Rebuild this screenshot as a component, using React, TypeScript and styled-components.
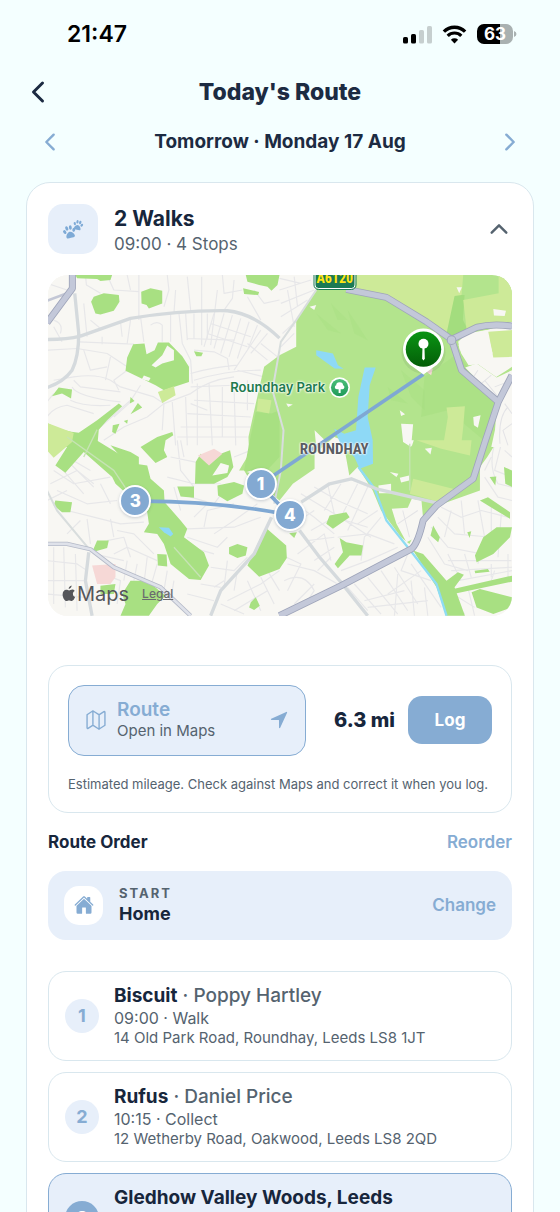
import React from 'react';
import styled, { createGlobalStyle } from 'styled-components';
import {
  IoChevronBack,
  IoChevronForward,
  IoChevronUp,
  IoHome,
  IoMapOutline,
  IoNavigate,
} from 'react-icons/io5';

const color = {
  page: '#f4ffff',
  ink: '#17263c',
  title: '#1c2b42',
  muted: '#55636f',
  blue: '#86acd3',
  tint: '#e7effa',
  line: '#d9e7ee',
  white: '#ffffff',
};

const GlobalStyle = createGlobalStyle`
  *, *::before, *::after { box-sizing: border-box; }
  html, body { margin: 0; background: ${color.page}; }
  body {
    font-family: Inter, "Liberation Sans", sans-serif;
    color: ${color.ink};
    -webkit-font-smoothing: antialiased;
  }
  button { font: inherit; color: inherit; background: none; border: 0; padding: 0; cursor: pointer; }
  h1, h2, h3, p, ol { margin: 0; padding: 0; font: inherit; }
`;

const Screen = styled.div`
  height: 100vh;
  display: flex;
  flex-direction: column;
  overflow: hidden;
`;

const StatusBar = styled.div`
  display: flex;
  align-items: center;
  justify-content: space-between;
  height: 68px;
  padding: 0 43px 0 67px;
  color: #000;
`;

const Clock = styled.time`
  font-size: 23px;
  line-height: 28px;
  font-weight: 600;
`;

const StatusIcons = styled.div`
  display: flex;
  align-items: center;
  gap: 10px;
`;

const Battery = styled.div`
  width: 40px;
  height: 20px;
  display: flex;
`;

const BatteryLevel = styled.span`
  width: 36px;
  height: 20px;
  border-radius: 7px;
  background: linear-gradient(90deg, #000 63%, #a9b1b1 63%);
  color: #fff;
  font-size: 17px;
  line-height: 20px;
  font-weight: 700;
  text-align: center;
`;

const Header = styled.header`
  display: grid;
  grid-template-columns: 32px 1fr 32px;
  align-items: center;
  height: 48px;
  padding: 0 22px;
  color: ${color.title};
`;

const IconButton = styled.button<{ $tone?: string }>`
  display: flex;
  align-items: center;
  justify-content: center;
  color: ${(p) => p.$tone ?? 'inherit'};
`;

const Title = styled.h1`
  font-size: 23px;
  line-height: 28px;
  font-weight: 800;
  text-align: center;
`;

const DateBar = styled.nav`
  display: flex;
  align-items: center;
  justify-content: space-between;
  height: 52px;
  padding: 0 37px;
`;

const DateLabel = styled.h2`
  font-size: 19px;
  line-height: 24px;
  font-weight: 700;
  color: ${color.title};
`;

const Scroll = styled.main`
  flex: 1;
  min-height: 0;
  overflow-y: auto;
  scrollbar-width: none;
  padding: 14px 26px 32px;
`;

const Card = styled.section`
  background: ${color.white};
  border: 1px solid ${color.line};
  border-radius: 24px;
  padding: 21px;
`;

const Summary = styled.div`
  display: flex;
  align-items: center;
  gap: 16px;
  padding-bottom: 21px;
`;

const Tile = styled.span<{ $size: number; $bg: string }>`
  flex: none;
  display: flex;
  align-items: center;
  justify-content: center;
  width: ${(p) => p.$size}px;
  height: ${(p) => p.$size}px;
  border-radius: 15px;
  background: ${(p) => p.$bg};
  color: ${color.blue};
`;

const Grow = styled.div`
  flex: 1;
  min-width: 0;
`;

const SummaryTitle = styled.h2`
  font-size: 21px;
  line-height: 26px;
  font-weight: 700;
`;

const SummaryMeta = styled.p`
  font-size: 17px;
  line-height: 24px;
  color: ${color.muted};
`;

const SummaryText = styled(Grow)`
  padding-top: 2px;
  margin-bottom: -2px;
`;

const MapFrame = styled.div`
  position: relative;
  aspect-ratio: 463 / 340;
  border-radius: 20px;
  overflow: hidden;
  background: #f8f7f3;
`;

const MapDrawing = styled.svg`
  display: block;
  width: 100%;
  height: 100%;
`;

const Pin = styled.span<{ $x: number; $y: number }>`
  position: absolute;
  left: ${(p) => p.$x}%;
  top: ${(p) => p.$y}%;
  transform: translate(-50%, -50%);
  width: 32px;
  height: 32px;
  border: 2px solid #fff;
  border-radius: 50%;
  background: #83a9d2;
  box-shadow: 0 1px 3px rgba(60, 80, 110, 0.25);
  color: #fff;
  font-size: 17px;
  line-height: 28px;
  font-weight: 800;
  text-align: center;
`;

const MapLabel = styled.span<{ $x: number; $y: number }>`
  position: absolute;
  left: ${(p) => p.$x}%;
  top: ${(p) => p.$y}%;
  transform: translate(-50%, -50%);
  white-space: nowrap;
`;

const ParkLabel = styled(MapLabel)`
  font-size: 13px;
  line-height: 16px;
  font-weight: 600;
  color: #217a4e;
  text-shadow: 0 0 2px #fff, 0 0 2px #fff, 0 0 3px #fff;
`;

const DistrictLabel = styled(MapLabel)`
  font-family: "Liberation Sans Narrow", "Roboto Condensed", Roboto, sans-serif;
  font-size: 15px;
  line-height: 18px;
  font-weight: 700;
  color: #5a5d63;
  text-shadow: 0 0 2px #fff, 0 0 2px #fff, 0 0 2px #fff;
`;

const RoadShield = styled(MapLabel)`
  width: 41px;
  height: 22px;
  border: 1px solid #fff;
  outline: 1px solid #1b7a55;
  border-radius: 4px;
  background: #1b7a55;
  color: #ffe512;
  font-family: "Liberation Sans Narrow", "Roboto Condensed", Roboto, sans-serif;
  font-size: 14px;
  line-height: 20px;
  font-weight: 700;
  text-align: center;
`;

const MapCredit = styled.div`
  position: absolute;
  left: 14px;
  bottom: 10px;
  display: flex;
  align-items: center;
  color: #55565a;
`;

const MapBrand = styled.span`
  display: flex;
  align-items: center;
  gap: 1px;
  margin-right: 13px;
  font-size: 20px;
  line-height: 24px;
  font-weight: 400;
`;

const LegalLink = styled.a`
  font-size: 12px;
  line-height: 16px;
  color: #6a6b6e;
  font-weight: 500;
  text-decoration: underline;
`;

const Panel = styled.section`
  margin-top: 49px;
  border: 1px solid ${color.line};
  border-radius: 20px;
  padding: 19px;
`;

const PanelRow = styled.div`
  display: flex;
  align-items: center;
`;

const RouteButton = styled.button`
  flex: 1;
  display: flex;
  align-items: center;
  gap: 10px;
  height: 71px;
  padding: 0 16px;
  border: 1px solid ${color.blue};
  border-radius: 16px;
  background: ${color.tint};
  color: ${color.blue};
  text-align: left;
`;

const ButtonTitle = styled.span`
  display: block;
  font-size: 19px;
  line-height: 22px;
  font-weight: 600;
`;

const ButtonNote = styled.span`
  display: block;
  font-size: 15px;
  line-height: 20px;
  color: ${color.muted};
`;

const Miles = styled.strong`
  margin: 0 13px 0 28px;
  font-size: 20px;
  line-height: 24px;
  font-weight: 800;
`;

const LogButton = styled.button`
  width: 84px;
  height: 48px;
  border-radius: 14px;
  background: ${color.blue};
  color: #fff;
  font-size: 17px;
  line-height: 24px;
  font-weight: 700;
`;

const Note = styled.p`
  margin-top: 19px;
  font-size: 13px;
  line-height: 18px;
  color: ${color.muted};
`;

const OrderHead = styled.div`
  display: flex;
  align-items: center;
  justify-content: space-between;
  height: 58px;
`;

const OrderTitle = styled.h3`
  font-size: 17px;
  line-height: 24px;
  font-weight: 700;
`;

const TextButton = styled.button`
  font-size: 17px;
  line-height: 24px;
  font-weight: 600;
  color: ${color.blue};
`;

const StartCard = styled.div`
  display: flex;
  align-items: center;
  gap: 16px;
  height: 69px;
  padding: 0 16px;
  border-radius: 18px;
  background: ${color.tint};
`;

const Eyebrow = styled.p`
  font-size: 13px;
  line-height: 18px;
  font-weight: 700;
  letter-spacing: 2px;
  color: ${color.muted};
`;

const Place = styled.p`
  font-size: 18px;
  line-height: 24px;
  font-weight: 700;
`;

const Stops = styled.ol`
  list-style: none;
  margin-top: 31px;
  display: flex;
  flex-direction: column;
  gap: 11px;
`;

const StopCard = styled.li<{ $active?: boolean }>`
  display: flex;
  align-items: center;
  gap: 15px;
  min-height: 90px;
  padding: 0 16px;
  border: 1px solid ${(p) => (p.$active ? color.blue : color.line)};
  border-radius: 18px;
  background: ${(p) => (p.$active ? color.tint : color.white)};
`;

const StopNumber = styled.span<{ $active?: boolean }>`
  flex: none;
  width: 34px;
  height: 34px;
  border-radius: 50%;
  background: ${(p) => (p.$active ? color.blue : color.tint)};
  color: ${(p) => (p.$active ? '#fff' : color.blue)};
  font-size: 18px;
  line-height: 34px;
  font-weight: 700;
  text-align: center;
`;

const StopBody = styled.div`
  flex: 1;
  min-width: 0;
  min-height: 64px;
`;

const StopName = styled.h3`
  font-size: 19px;
  line-height: 24px;
  font-weight: 700;
`;

const Owner = styled.span`
  font-weight: 500;
  color: ${color.muted};
`;

const StopTime = styled.p`
  font-size: 16px;
  line-height: 20px;
  color: ${color.muted};
`;

const StopAddress = styled.p`
  font-size: 15px;
  line-height: 20px;
  color: ${color.muted};
`;

const PawShape = () => (
  <>
    <path d="M0 0.6C2.4 0.6 5.4 4 5.4 6.3C5.4 9 2.4 8.2 0 8.2S-5.4 9-5.4 6.3C-5.4 4-2.4 0.6 0 0.6Z" />
    <ellipse cx="-5.8" cy="-0.6" rx="1.8" ry="2.6" transform="rotate(-24 -5.8 -0.6)" />
    <ellipse cx="-2.3" cy="-4.4" rx="1.8" ry="2.9" transform="rotate(-6 -2.3 -4.4)" />
    <ellipse cx="2.3" cy="-4.4" rx="1.8" ry="2.9" transform="rotate(6 2.3 -4.4)" />
    <ellipse cx="5.8" cy="-0.6" rx="1.8" ry="2.6" transform="rotate(24 5.8 -0.6)" />
  </>
);

const PawsIcon = () => (
  <svg width="22" height="20" viewBox="0 0 22 20" fill="#7eaad6" aria-hidden="true">
    <g transform="translate(7.4 12.4) rotate(-14) scale(0.8)">
      <PawShape />
    </g>
    <g transform="translate(16.2 5.8) rotate(14) scale(0.62)">
      <PawShape />
    </g>
  </svg>
);

const SignalIcon = () => (
  <svg width="29" height="19" viewBox="0 0 29 19" aria-hidden="true">
    <rect x="0" y="12" width="5" height="6.5" rx="1.6" />
    <rect x="8" y="9" width="5" height="9.5" rx="1.6" />
    <rect x="16" y="5" width="5" height="13.5" rx="1.6" fill="#c6cfcf" />
    <rect x="24" y="1" width="5" height="17.5" rx="1.6" fill="#c6cfcf" />
  </svg>
);

const WifiIcon = () => (
  <svg width="25" height="19" viewBox="0 0 24 19" fill="none" stroke="#000" aria-hidden="true">
    <path d="M1.4 6.6A15 15 0 0 1 22.6 6.6" strokeWidth="3.4" />
    <path d="M5.2 10.8A9.6 9.6 0 0 1 18.8 10.8" strokeWidth="3.2" />
    <path d="M12 18.6L8.4 14.7A5.2 5.2 0 0 1 15.6 14.7Z" fill="#000" stroke="none" />
  </svg>
);

const AppleIcon = () => (
  <svg width="14" height="17" viewBox="0 0 14 17" fill="currentColor" aria-hidden="true">
    <path d="M9.6 0.5C9.7 2 8.3 3.9 6.7 3.9C6.5 2.3 8.1 0.7 9.6 0.5ZM12.7 6C11.5 6.7 10.9 7.6 10.9 8.9C10.9 10.4 11.8 11.5 13.1 12C12.5 13.7 11.1 16 9.7 16C8.7 16 8.3 15.4 7.1 15.4C5.9 15.4 5.4 16 4.5 16C2.7 16 0.6 12.5 0.6 9.4C0.6 6.4 2.4 4.7 4.4 4.7C5.5 4.7 6.3 5.4 7.1 5.4C7.9 5.4 8.9 4.6 10.2 4.6C11.2 4.6 12.1 5.1 12.7 6Z" />
  </svg>
);

const minorRoads = [
  // north-west streets
  'M115 15L118 45L160 70M180 15L200 60L275 65M240 15L250 60M275 15V150M360 15L365 60L350 110M385 60L380 130M420 20L430 120M463 20V225M510 60L490 225M525 15L530 70L585 60M560 30L555 85L530 120',
  'M0 40L60 60M20 150Q50 160 40 190M20 170L45 215M0 240L90 235L180 250L240 290M95 215L260 222M110 100L120 200M130 150L160 175M165 200V222M220 155L225 200M250 150L240 220M280 140L290 215M310 165Q330 150 345 165V215M370 130V215M395 130L405 220L430 270L435 340M415 130L420 210M440 130V205M480 130V205M420 205L560 210',
  'M500 130L470 230M530 130L500 235M555 135L520 250M580 145L545 260M605 155L570 265M630 165L600 240M490 160L610 200M480 190L600 230M640 180L560 300M660 190L610 250M600 220L660 270M440 240L500 245L540 265L545 300M430 310Q500 290 570 285M440 330Q540 300 640 300M430 350L560 345M570 300L650 320',
  'M20 330L80 320Q150 310 190 330L220 350L320 380L350 400L430 370Q480 330 560 320M80 330L100 350L220 365M75 350Q90 380 220 395M70 390Q110 410 190 405M0 440Q20 410 60 405L140 430M0 395L20 370M110 240L130 300L180 290M190 260L175 330M240 300L200 330L215 360M200 440L245 400L280 345M160 470L250 390M170 510L230 470L300 440L350 400',
  'M350 400L345 480M375 395L385 525M415 380L420 525M450 340V525M485 340L495 525M525 350V500M560 350L565 525M600 330L600 420M440 390L620 400M420 430L610 440M400 470L610 470M390 500L600 500M430 400L480 420',
  // south-west streets
  'M20 600L80 640L190 620M10 640L90 600L140 640M30 660L120 700L210 690M40 590L110 670M70 580L140 650M0 690L60 660M60 720L140 740L220 760L290 755M120 745L130 820M190 745L200 800M160 640L190 700M100 750L60 790M60 560L130 600',
  'M210 780L260 790L320 850M180 810L230 800L250 860M200 850L240 830L330 870M140 850L230 870M0 870L90 880L120 900M20 830V1000M50 830L55 1010M85 850L90 1020M0 930H110M0 970L115 980M140 900L220 930L210 1000M240 870L230 930M270 880L260 930M300 860L290 940M330 880L310 950M360 900L350 960M380 930L370 990',
  'M390 510L400 600L440 650M370 560L445 575M360 620L440 640L520 640M380 650L400 720M430 680L500 700L530 660M420 775L560 770L640 740M440 740L480 700M470 770L480 720L560 700M500 790L560 750L630 700M420 800L510 830L540 800M430 830L500 850M490 890L560 900L600 860M500 950L530 930M460 940L520 950M420 970L500 990M540 870L530 950M570 900L560 960M400 510L410 560M560 560L610 540',
  'M540 990L640 940L696 900M560 1020L660 960M600 930L640 1020M640 920L680 1000M520 1000L590 1030M660 900L696 960',
  // streets below the park
  'M730 690L800 740L860 790M760 670L860 730L970 800M800 650L870 690L960 730M840 640L860 730M880 640L830 720M930 640L880 740M960 650L900 780M740 760L800 720M790 780L860 740L960 770M870 800L960 790L1040 820M780 810L860 800M750 850L830 790L850 870M800 870L860 830M880 900L960 870L1050 830M990 720L930 760M1000 740L950 800L940 870',
  'M696 850L760 880L720 960M720 880L800 900L870 940M710 930Q770 900 800 960L780 990M740 1000L800 940M810 900L850 860M900 950L960 1020M920 940L1000 1030M960 920L1050 1030M1000 900L1080 1020M1040 890L1110 1000M1020 970L1120 900M950 990L1070 960M960 1010L1140 990M1080 850L1060 900L1150 930M1090 880L1180 1010M1050 910L1040 1035M1090 930L1100 1035M1130 950L1140 1035',
  // eastern streets
  'M1180 710L1240 740L1300 720L1380 740M1170 740L1220 790L1330 800M1150 770L1200 830L1300 850M1140 800L1190 880L1260 900M1240 690L1250 790M1290 690L1310 800L1290 880M1210 720L1190 800M1330 710L1330 800M1360 730L1350 860M1200 870L1390 870M1210 900L1392 890M1230 930L1392 900M1200 850L1240 930M1250 850L1270 920M1330 880V920M1200 960L1280 1010M1210 980L1250 1030M1260 950L1280 1035M1340 900L1330 930M1380 850V920',
  'M1340 520Q1320 590 1350 640L1392 650M1360 520L1340 600L1392 620M1370 540L1392 560M1310 620L1350 680L1392 690M1330 560L1310 600M1380 430Q1350 440 1352 500M1392 460L1365 480L1370 520',
  // streets west of the park
  'M790 30L696 60M800 60L700 100M780 90L700 140M760 40L696 25M740 20L750 110M770 130L705 190M700 230L740 190M720 60L740 170M640 220L690 260M620 60L650 100L696 90M600 80L640 150',
];

const trunkRoads =
  'M896 58L1016 82L1136 155L1211 208L1286 172Q1330 160 1392 168M1211 208L1241 300L1351 395L1392 315M1351 395L1326 470L1311 515L1276 625L1166 705L1126 750Q1110 820 1091 835L881 945L696 1035M76 15V55L0 158';

const MapPicture = () => (
  <MapDrawing viewBox="3 15 1389 1020" preserveAspectRatio="xMidYMid slice" aria-hidden="true">
    <defs>
      <linearGradient id="pinFill" x1="0" y1="0" x2="0" y2="1">
        <stop offset="0" stopColor="#0a9414" />
        <stop offset="1" stopColor="#045e08" />
      </linearGradient>
      <linearGradient id="badgeFill" x1="0" y1="0" x2="0" y2="1">
        <stop offset="0" stopColor="#4cc07a" />
        <stop offset="1" stopColor="#1f9a58" />
      </linearGradient>
    </defs>
    <rect x="0" y="0" width="1400" height="1050" fill="#f8f7f3" />

    <g fill="none" stroke="#e7e7e9" strokeWidth="3.5" strokeLinejoin="round">
      {minorRoads.map((d) => (
        <path key={d} d={d} />
      ))}
    </g>

    <path
      fill="#b3e48d"
      d="M805 15H1392V155L1318 180L1250 195L1232 225L1240 250L1262 285L1290 282L1345 320L1392 290V330L1345 395L1340 525L1318 560L1296 590V660L1170 705L1110 770L1085 820L1060 800L1000 720L975 660L930 590L905 615L886 510L860 500L801 550V595L736 640L696 690L650 650H620L590 600H575L605 550L603 500L625 400L650 290L696 255L746 230V150L806 60Z"
    />

    <g fill="#a8e082">
      <path d="M85 15H195L190 30L160 33L150 27L90 25Z" />
      <path d="M140 80L170 70L215 75L217 95L200 122L160 133L145 130L132 95Z" />
      <path d="M282 65L310 55L345 62V100L305 115L298 105L283 100Z" />
      <path d="M595 15H696L690 45L672 62L660 50L635 45L600 35ZM587 55L635 66L632 75L590 72Z" />
      <path d="M258 222L292 220L298 252L322 240L332 217L365 217L405 258L425 290V335L350 360L325 345L235 302L240 262Z" />
      <path d="M440 243L467 248L462 258L447 258ZM15 378L35 352L75 358L72 385L45 370Z" />
      <path d="M0 458Q50 485 95 487L150 450L215 400L225 408L180 450L155 478L152 512L190 535L265 580L300 585L310 625L350 660L352 695L400 750L420 775L410 800L470 845L485 885L460 928L425 925L370 880L350 820L330 790L290 785L305 760L300 725L205 640L195 620L110 545L55 607L25 585L60 530L0 520Z" />
      <path d="M250 380L262 392L248 400ZM272 398L285 412L250 432ZM197 465L217 460L205 490L195 485ZM230 452L242 448L240 460Z" />
      <path d="M280 530L330 500L375 485L378 495L355 510L350 540L360 560L325 578ZM190 525L250 545L275 560V585L240 580Z" />
      <path fillRule="evenodd" d="M445 575L460 550L490 575L520 550L548 540L558 590L540 620L500 640H443ZM495 615L520 578L545 585L540 608Z" />
      <path d="M390 648H440V682L400 678ZM510 645L560 635L590 645L585 670L540 692L512 675Z" />
      <path d="M25 690L75 695L70 725L45 725L20 705ZM150 810L185 810L180 832L135 845Z" />
      <path d="M160 945L205 940L200 970H160ZM250 930H300L355 975L330 1000L305 1035H220L235 1000L225 970ZM330 850L358 852L360 888L332 885Z" />
      <path d="M545 830L570 820L600 830L595 855L570 862L545 850ZM655 772L716 825L718 862L696 895L635 918L600 885L640 800ZM610 995L625 980L637 1005L620 1018L605 1010Z" />
      <path d="M836 760L846 735L896 725L906 740L856 775ZM876 802L896 815L946 825L941 855H906L871 893L861 880L886 845ZM725 788L748 785L740 802Z" />
      <path d="M1096 840L1126 850L1196 930L1230 905L1248 912L1220 950L1251 1035H1196L1166 950ZM1281 855L1306 800L1346 770H1392L1386 800L1336 850L1286 875Z" />
      <path d="M1296 690L1320 680L1386 725V745L1336 715ZM1156 765L1176 800L1171 815L1148 795ZM1271 965L1296 955L1392 980V1010L1336 1030L1286 1010ZM1216 955L1392 915V933L1216 970ZM1368 590L1392 600V650L1372 640ZM1325 620L1345 618L1342 645ZM1280 900L1320 895L1325 903L1282 908ZM1258 785L1270 782L1265 802Z" />
      <path d="M605 520L625 425L672 430L696 420V560L640 620L590 600Z" />
    </g>

    <g fill="#a3dd7e">
      <path opacity="0.3" d="M806 130L880 190L840 180ZM900 120L960 210L920 190ZM850 100L900 150L870 150ZM1020 350L1080 400L1030 390ZM1060 300L1130 360V420L1090 380Z" />
      <path d="M1220 75H1250L1245 150L1260 180L1212 205L1192 190Z" />
      <path opacity="0.4" d="M1130 320L1230 250L1340 400L1320 520L1200 420L1120 440Z" />
    </g>

    <g fill="#cdea98">
      <path d="M921 15H1246L1241 75L1220 78L1196 190L1136 150L1016 82L926 55Z" />
      <path d="M1246 90L1352 70V15H1392V155L1286 160L1256 178Z" />
      <path d="M1321 185L1392 180V260L1336 262Z" />
      <path d="M1196 412L1251 408L1246 470L1240 525H1186L1200 440Z" />
      <path d="M1096 625L1236 660L1176 695L1086 670ZM1106 510H1271L1266 555L1180 535Z" />
      <path d="M332 365L380 348L385 375L345 398ZM0 458L80 488L75 515L20 562L0 540ZM632 385L672 390L665 430L628 422Z" />
    </g>

    <g fill="#f6d8d6">
      <path d="M452 555L500 535L525 550L485 585ZM135 885L205 880V920L190 940H150ZM1130 300L1155 295L1150 315Z" />
    </g>

    <g fill="#f8f7f3">
      <path d="M360 226L380 240V270L345 280L325 292L313 285L345 255ZM290 316L310 323L305 332L284 327ZM598 605L612 600L615 610Z" />
      <path d="M1231 215L1256 190L1316 180L1334 250L1296 258L1236 240Z" />
      <path d="M1252 292L1286 280L1346 322L1392 300V330L1350 395Z" />
      <path d="M1362 400L1392 345V530H1330L1345 460Z" />
      <path d="M1032 715L1080 712L1092 685L1121 690L1126 745L1096 805L1076 815L1046 760Z" />
      <path d="M992 645L1030 640V668L994 668ZM1026 605L1052 610L1046 620ZM1056 622L1084 615V630L1060 636ZM1076 510H1098L1092 528ZM1131 535L1152 532L1148 552Z" />
      <path d="M1056 420L1072 432L1060 437ZM1060 460L1096 462L1090 530L1066 515ZM1276 440L1298 435L1290 472L1278 465ZM1226 52H1242L1234 70ZM1336 117L1374 122L1370 138L1338 136Z" />
      <path d="M801 480L832 510L806 530ZM716 400L736 403L722 410ZM786 110L806 105L800 120Z" />
    </g>
    <path
      fill="none"
      stroke="#e3e3e6"
      strokeWidth="3"
      d="M1262 310L1300 350M1290 300L1270 330M1310 330L1350 380M1330 315L1300 340M1392 330L1340 350M1380 410Q1350 440 1356 520M1392 460L1365 480L1380 525M1370 400L1392 430M1050 760L1110 720M1065 720L1085 800"
    />

    <g fill="#8ed9f6">
      <path d="M806 240L856 250L871 285L888 296L861 295L806 255Z" />
      <path d="M951 292H984L966 345L960 440L975 510L976 580L936 595L920 560L880 525L860 475L890 490L925 480L932 380Z" />
      <path d="M335 770L365 772L378 790L370 798L350 785Z" />
    </g>
    <path d="M932 590L981 655L1016 750L1096 850L1166 940L1196 1035" fill="none" stroke="#8edcf3" strokeWidth="7" />

    <g fill="none" stroke="#d5dadd" strokeLinejoin="round">
      <g strokeWidth="10">
        <path d="M0 208Q60 208 100 198L250 145Q400 120 540 122Q620 130 696 204M83 70L95 190Q95 260 75 300Q50 335 0 352" />
        <path d="M761 695L846 640L911 625L986 655L1166 697M756 780L816 860L876 930L960 1035" />
        <path d="M672 740L620 850L520 960L490 1035M125 845L115 930L135 1035" />
      </g>
      <g strokeWidth="6">
        <path d="M806 60L746 150L700 215L675 360L708 480L700 600L680 700M0 660L30 720L130 840" stroke="#d8dddd" />
        <path d="M1086 520V660M150 478L110 560M60 500L200 600L240 660M380 830L460 920" stroke="#c6e3b4" strokeWidth="4" />
      </g>
    </g>
    <g fill="none" strokeLinejoin="round">
      <path d="M0 820H60L130 836L200 890L340 950L430 1035" stroke="#b5bac8" strokeWidth="13" />
      <path d="M0 820H60L130 836L200 890L340 950L430 1035" stroke="#dfe2ea" strokeWidth="8" />
      <path d="M0 92L60 70" stroke="#c3c7d5" strokeWidth="8" />
      <path d={trunkRoads} stroke="#9fa5ba" strokeWidth="21" />
      <path d={trunkRoads} stroke="#c3c8d9" strokeWidth="16" />
      <circle cx="1211" cy="210" r="13" fill="#c3c8d9" stroke="#9fa5ba" strokeWidth="3" />
    </g>

    <g fill="none" stroke="#7fa8d3" strokeWidth="11">
      <path d="M1127 312L638 642L726 735" />
      <path d="M262 692Q500 690 726 733" />
    </g>

    <circle cx="876" cy="352" r="31" fill="#fff" />
    <circle cx="876" cy="352" r="26" fill="url(#badgeFill)" />
    <path d="M876 336C884 336 887 341 886 345C892 346 892 357 884 357H879V368H873V357H868C860 357 860 346 866 345C865 341 868 336 876 336Z" fill="#fff" />

    <g>
      <ellipse cx="1127" cy="246" rx="66" ry="64" fill="#50705020" />
      <path d="M1127 175A62 62 0 0 1 1160 289L1127 313L1094 289A62 62 0 0 1 1127 175Z" fill="#fff" />
      <circle cx="1127" cy="237" r="53" fill="url(#pinFill)" />
      <circle cx="1127" cy="221" r="15" fill="#fff" />
      <path d="M1124 232H1130L1131 266L1127 271L1123 266Z" fill="#fff" />
    </g>
  </MapDrawing>
);

type Stop = { name: string; owner?: string; time?: string; address?: string; active?: boolean };

const stops: Stop[] = [
  { name: 'Biscuit', owner: 'Poppy Hartley', time: '09:00 · Walk', address: '14 Old Park Road, Roundhay, Leeds LS8 1JT' },
  { name: 'Rufus', owner: 'Daniel Price', time: '10:15 · Collect', address: '12 Wetherby Road, Oakwood, Leeds LS8 2QD' },
  { name: 'Gledhow Valley Woods, Leeds', active: true },
];

export default function App() {
  return (
    <Screen>
      <GlobalStyle />
      <StatusBar>
        <Clock>21:47</Clock>
        <StatusIcons>
          <SignalIcon />
          <WifiIcon />
          <Battery>
            <BatteryLevel>63</BatteryLevel>
            <svg width="4" height="20" viewBox="0 0 4 20" aria-hidden="true">
              <path d="M1 7Q3.5 8 3.5 10T1 13Z" fill="#a9b1b1" />
            </svg>
          </Battery>
        </StatusIcons>
      </StatusBar>

      <Header>
        <IconButton aria-label="Back">
          <IoChevronBack size={32} />
        </IconButton>
        <Title>Today's Route</Title>
      </Header>

      <DateBar>
        <IconButton aria-label="Previous day" $tone={color.blue}>
          <IoChevronBack size={26} />
        </IconButton>
        <DateLabel>Tomorrow · Monday 17 Aug</DateLabel>
        <IconButton aria-label="Next day" $tone={color.blue}>
          <IoChevronForward size={26} />
        </IconButton>
      </DateBar>

      <Scroll>
        <Card>
          <Summary>
            <Tile $size={50} $bg={color.tint}>
              <PawsIcon />
            </Tile>
            <SummaryText>
              <SummaryTitle>2 Walks</SummaryTitle>
              <SummaryMeta>09:00 · 4 Stops</SummaryMeta>
            </SummaryText>
            <IconButton aria-label="Collapse" $tone={color.muted}>
              <IoChevronUp size={26} />
            </IconButton>
          </Summary>

          <MapFrame>
            <MapPicture />
            <RoadShield $x={61.8} $y={1}>A6120</RoadShield>
            <ParkLabel $x={49.5} $y={33}>Roundhay Park</ParkLabel>
            <DistrictLabel $x={61.7} $y={51}>ROUNDHAY</DistrictLabel>
            <Pin $x={45.8} $y={61.4}>1</Pin>
            <Pin $x={18.8} $y={66.3}>3</Pin>
            <Pin $x={52.1} $y={70.5}>4</Pin>
            <MapCredit>
              <MapBrand>
                <AppleIcon />
                Maps
              </MapBrand>
              <LegalLink href="#legal">Legal</LegalLink>
            </MapCredit>
          </MapFrame>

          <Panel>
            <PanelRow>
              <RouteButton>
                <IoMapOutline size={22} />
                <Grow as="span">
                  <ButtonTitle>Route</ButtonTitle>
                  <ButtonNote>Open in Maps</ButtonNote>
                </Grow>
                <IoNavigate size={20} />
              </RouteButton>
              <Miles>6.3 mi</Miles>
              <LogButton>Log</LogButton>
            </PanelRow>
            <Note>Estimated mileage. Check against Maps and correct it when you log.</Note>
          </Panel>

          <OrderHead>
            <OrderTitle>Route Order</OrderTitle>
            <TextButton>Reorder</TextButton>
          </OrderHead>

          <StartCard>
            <Tile $size={39} $bg={color.white}>
              <IoHome size={20} />
            </Tile>
            <Grow>
              <Eyebrow>START</Eyebrow>
              <Place>Home</Place>
            </Grow>
            <TextButton>Change</TextButton>
          </StartCard>

          <Stops>
            {stops.map((stop, i) => (
              <StopCard key={stop.name} $active={stop.active}>
                <StopNumber $active={stop.active}>{i + 1}</StopNumber>
                <StopBody>
                  <StopName>
                    {stop.name}
                    {stop.owner && <Owner> · {stop.owner}</Owner>}
                  </StopName>
                  {stop.time && <StopTime>{stop.time}</StopTime>}
                  {stop.address && <StopAddress>{stop.address}</StopAddress>}
                </StopBody>
              </StopCard>
            ))}
          </Stops>
        </Card>
      </Scroll>
    </Screen>
  );
}
